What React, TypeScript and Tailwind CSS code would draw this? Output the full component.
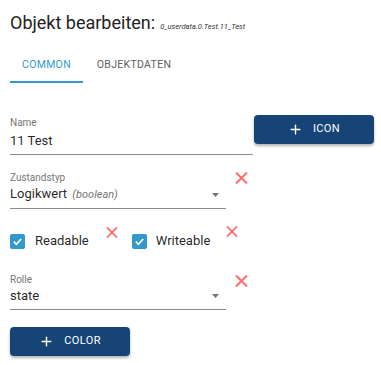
import { Plus } from 'lucide-react';

function RedX({ className = '' }: { className?: string }) {
  return (
    <svg viewBox="0 0 13 12" className={`shrink-0 ${className}`}>
      <path d="M1 0.5 L12 11.5 M12 0.5 L1 11.5" stroke="#ff6b6b" strokeWidth="2" fill="none" />
    </svg>
  );
}

function Checkbox() {
  return (
    <span className="w-[15px] h-[15px] rounded-[2px] bg-[#3399cc] flex items-center justify-center">
      <svg viewBox="0 0 12 12" className="w-[11px] h-[11px]">
        <path d="M2 6.2 L4.8 9 L10 3.2" stroke="#fff" strokeWidth="1.8" fill="none" />
      </svg>
    </span>
  );
}

function Field({ label, children, width, select }: { label: string; children: React.ReactNode; width: string; select?: boolean }) {
  return (
    <div className={`${width} shrink-0 flex flex-col`}>
      <span className="text-[10px] leading-[12px] text-[#757575]">{label}</span>
      <div className={`flex items-center justify-between border-b border-[#8c8c8c] pb-[3px] ${select ? 'pt-0' : 'pt-[2px]'}`}>
        <span className="text-[13px] leading-[20px] text-[rgba(0,0,0,0.87)]">{children}</span>
        {select && (
          <svg viewBox="0 0 7 4" className="w-[7px] h-[4px] mr-[7px]">
            <path d="M0 0 L7 0 L3.5 4 Z" fill="#757575" />
          </svg>
        )}
      </div>
    </div>
  );
}

function BlueButton({ label }: { label: string }) {
  return (
    <button className="w-[120px] h-[29px] shrink-0 rounded-[4px] bg-[#164477] text-white flex items-center justify-center gap-[10px] shadow-[0_2px_3px_rgba(0,0,0,0.3)]">
      <Plus className="w-[15px] h-[15px]" strokeWidth={2.2} />
      <span className="text-[11px] tracking-[0.4px]">{label}</span>
    </button>
  );
}

export default function App() {
  return (
    <div className="w-[381px] h-[365px] bg-white px-[10px] font-['Roboto',sans-serif] text-[rgba(0,0,0,0.87)]">
      <div className="pt-[11px] h-[51px] flex items-baseline gap-[5px]">
        <span className="text-[18px] leading-[24px] text-[#222]">Objekt bearbeiten:</span>
        <span className="text-[7.5px] italic text-[#333]">0_userdata.0.Test.11_Test</span>
      </div>

      <div className="flex">
        <div className="w-[73px] flex flex-col items-center">
          <span className="leading-[27px] text-[10.5px] tracking-[0.3px] text-[#3399cc]">COMMON</span>
          <span className="mt-[3px] h-[2px] w-full bg-[#3399cc]" />
        </div>
        <div className="w-[102px] flex flex-col items-center">
          <span className="leading-[27px] text-[10.5px] tracking-[0.3px] text-[#616161]">OBJEKTDATEN</span>
        </div>
      </div>

      <div className="mt-[34px] flex items-start">
        <Field label="Name" width="w-[243px]">11 Test</Field>
        <div className="ml-[1px] -mt-[2px] shrink-0">
          <BlueButton label="ICON" />
        </div>
      </div>

      <div className="mt-[17px] flex items-start">
        <Field label="Zustandstyp" width="w-[216px]" select>
          Logikwert <span className="italic text-[11px] text-[#757575] ml-[2px]">(boolean)</span>
        </Field>
        <RedX className="w-[13px] h-[12px] ml-[9px]" />
      </div>

      <div className="mt-[20px] flex items-center h-[24px] text-[13px]">
        <Checkbox />
        <span className="ml-[10px]">Readable</span>
        <RedX className="w-[12px] h-[11px] ml-[17px] -mt-[17px]" />
        <span className="ml-[14px]"><Checkbox /></span>
        <span className="ml-[9px]">Writeable</span>
        <RedX className="w-[12px] h-[11px] ml-[16px] -mt-[19px]" />
      </div>

      <div className="mt-[21px] flex items-start">
        <Field label="Rolle" width="w-[216px]" select>state</Field>
        <RedX className="w-[13px] h-[12px] ml-[9px] mt-[1px]" />
      </div>

      <div className="mt-[17px]">
        <BlueButton label="COLOR" />
      </div>
    </div>
  );
}
